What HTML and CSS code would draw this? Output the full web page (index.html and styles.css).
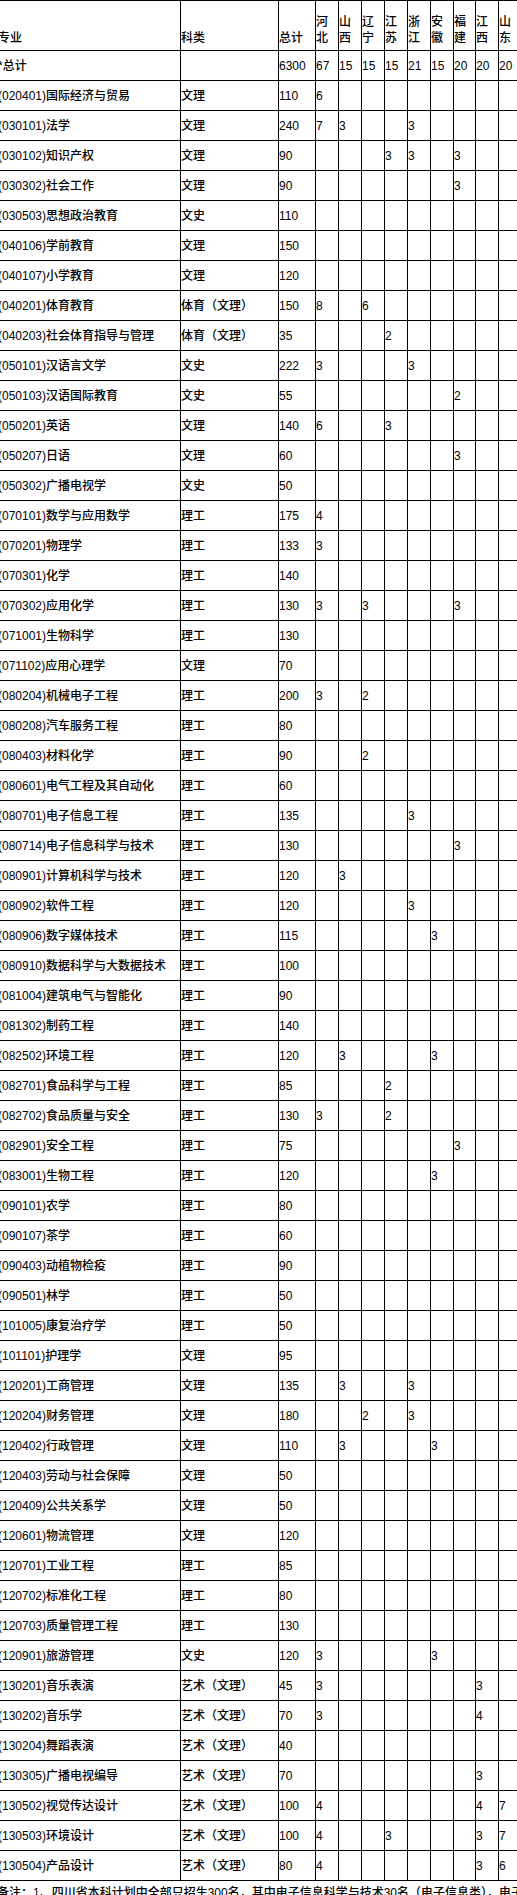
FILE: index.html
```html
<!DOCTYPE html>
<html lang="zh-CN">
<head>
<meta charset="utf-8">
<title>招生计划</title>
<link rel="stylesheet" href="styles.css">
</head>
<body>
<table class="sheet">
<thead>
<tr class="head">
<td class="c-major">专业</td><td class="c-type">科类</td><td class="c-total">总计</td>
<td class="c-p">河北</td><td class="c-p">山西</td><td class="c-p">辽宁</td><td class="c-p">江苏</td><td class="c-p">浙江</td><td class="c-p">安徽</td><td class="c-p c-narrow">福建</td><td class="c-p">江西</td><td class="c-p">山东</td>
</tr>
</thead>
<tbody>
<tr><td>*总计</td><td></td><td>6300</td><td>67</td><td>15</td><td>15</td><td>15</td><td>21</td><td>15</td><td>20</td><td>20</td><td>20</td></tr>
<tr><td>(020401)国际经济与贸易</td><td>文理</td><td>110</td><td>6</td><td></td><td></td><td></td><td></td><td></td><td></td><td></td><td></td></tr>
<tr><td>(030101)法学</td><td>文理</td><td>240</td><td>7</td><td>3</td><td></td><td></td><td>3</td><td></td><td></td><td></td><td></td></tr>
<tr><td>(030102)知识产权</td><td>文理</td><td>90</td><td></td><td></td><td></td><td>3</td><td>3</td><td></td><td>3</td><td></td><td></td></tr>
<tr><td>(030302)社会工作</td><td>文理</td><td>90</td><td></td><td></td><td></td><td></td><td></td><td></td><td>3</td><td></td><td></td></tr>
<tr><td>(030503)思想政治教育</td><td>文史</td><td>110</td><td></td><td></td><td></td><td></td><td></td><td></td><td></td><td></td><td></td></tr>
<tr><td>(040106)学前教育</td><td>文理</td><td>150</td><td></td><td></td><td></td><td></td><td></td><td></td><td></td><td></td><td></td></tr>
<tr><td>(040107)小学教育</td><td>文理</td><td>120</td><td></td><td></td><td></td><td></td><td></td><td></td><td></td><td></td><td></td></tr>
<tr><td>(040201)体育教育</td><td>体育（文理）</td><td>150</td><td>8</td><td></td><td>6</td><td></td><td></td><td></td><td></td><td></td><td></td></tr>
<tr><td>(040203)社会体育指导与管理</td><td>体育（文理）</td><td>35</td><td></td><td></td><td></td><td>2</td><td></td><td></td><td></td><td></td><td></td></tr>
<tr><td>(050101)汉语言文学</td><td>文史</td><td>222</td><td>3</td><td></td><td></td><td></td><td>3</td><td></td><td></td><td></td><td></td></tr>
<tr><td>(050103)汉语国际教育</td><td>文史</td><td>55</td><td></td><td></td><td></td><td></td><td></td><td></td><td>2</td><td></td><td></td></tr>
<tr><td>(050201)英语</td><td>文理</td><td>140</td><td>6</td><td></td><td></td><td>3</td><td></td><td></td><td></td><td></td><td></td></tr>
<tr><td>(050207)日语</td><td>文理</td><td>60</td><td></td><td></td><td></td><td></td><td></td><td></td><td>3</td><td></td><td></td></tr>
<tr><td>(050302)广播电视学</td><td>文史</td><td>50</td><td></td><td></td><td></td><td></td><td></td><td></td><td></td><td></td><td></td></tr>
<tr><td>(070101)数学与应用数学</td><td>理工</td><td>175</td><td>4</td><td></td><td></td><td></td><td></td><td></td><td></td><td></td><td></td></tr>
<tr><td>(070201)物理学</td><td>理工</td><td>133</td><td>3</td><td></td><td></td><td></td><td></td><td></td><td></td><td></td><td></td></tr>
<tr><td>(070301)化学</td><td>理工</td><td>140</td><td></td><td></td><td></td><td></td><td></td><td></td><td></td><td></td><td></td></tr>
<tr><td>(070302)应用化学</td><td>理工</td><td>130</td><td>3</td><td></td><td>3</td><td></td><td></td><td></td><td>3</td><td></td><td></td></tr>
<tr><td>(071001)生物科学</td><td>理工</td><td>130</td><td></td><td></td><td></td><td></td><td></td><td></td><td></td><td></td><td></td></tr>
<tr><td>(071102)应用心理学</td><td>文理</td><td>70</td><td></td><td></td><td></td><td></td><td></td><td></td><td></td><td></td><td></td></tr>
<tr><td>(080204)机械电子工程</td><td>理工</td><td>200</td><td>3</td><td></td><td>2</td><td></td><td></td><td></td><td></td><td></td><td></td></tr>
<tr><td>(080208)汽车服务工程</td><td>理工</td><td>80</td><td></td><td></td><td></td><td></td><td></td><td></td><td></td><td></td><td></td></tr>
<tr><td>(080403)材料化学</td><td>理工</td><td>90</td><td></td><td></td><td>2</td><td></td><td></td><td></td><td></td><td></td><td></td></tr>
<tr><td>(080601)电气工程及其自动化</td><td>理工</td><td>60</td><td></td><td></td><td></td><td></td><td></td><td></td><td></td><td></td><td></td></tr>
<tr><td>(080701)电子信息工程</td><td>理工</td><td>135</td><td></td><td></td><td></td><td></td><td>3</td><td></td><td></td><td></td><td></td></tr>
<tr><td>(080714)电子信息科学与技术</td><td>理工</td><td>130</td><td></td><td></td><td></td><td></td><td></td><td></td><td>3</td><td></td><td></td></tr>
<tr><td>(080901)计算机科学与技术</td><td>理工</td><td>120</td><td></td><td>3</td><td></td><td></td><td></td><td></td><td></td><td></td><td></td></tr>
<tr><td>(080902)软件工程</td><td>理工</td><td>120</td><td></td><td></td><td></td><td></td><td>3</td><td></td><td></td><td></td><td></td></tr>
<tr><td>(080906)数字媒体技术</td><td>理工</td><td>115</td><td></td><td></td><td></td><td></td><td></td><td>3</td><td></td><td></td><td></td></tr>
<tr><td>(080910)数据科学与大数据技术</td><td>理工</td><td>100</td><td></td><td></td><td></td><td></td><td></td><td></td><td></td><td></td><td></td></tr>
<tr><td>(081004)建筑电气与智能化</td><td>理工</td><td>90</td><td></td><td></td><td></td><td></td><td></td><td></td><td></td><td></td><td></td></tr>
<tr><td>(081302)制药工程</td><td>理工</td><td>140</td><td></td><td></td><td></td><td></td><td></td><td></td><td></td><td></td><td></td></tr>
<tr><td>(082502)环境工程</td><td>理工</td><td>120</td><td></td><td>3</td><td></td><td></td><td></td><td>3</td><td></td><td></td><td></td></tr>
<tr><td>(082701)食品科学与工程</td><td>理工</td><td>85</td><td></td><td></td><td></td><td>2</td><td></td><td></td><td></td><td></td><td></td></tr>
<tr><td>(082702)食品质量与安全</td><td>理工</td><td>130</td><td>3</td><td></td><td></td><td>2</td><td></td><td></td><td></td><td></td><td></td></tr>
<tr><td>(082901)安全工程</td><td>理工</td><td>75</td><td></td><td></td><td></td><td></td><td></td><td></td><td>3</td><td></td><td></td></tr>
<tr><td>(083001)生物工程</td><td>理工</td><td>120</td><td></td><td></td><td></td><td></td><td></td><td>3</td><td></td><td></td><td></td></tr>
<tr><td>(090101)农学</td><td>理工</td><td>80</td><td></td><td></td><td></td><td></td><td></td><td></td><td></td><td></td><td></td></tr>
<tr><td>(090107)茶学</td><td>理工</td><td>60</td><td></td><td></td><td></td><td></td><td></td><td></td><td></td><td></td><td></td></tr>
<tr><td>(090403)动植物检疫</td><td>理工</td><td>90</td><td></td><td></td><td></td><td></td><td></td><td></td><td></td><td></td><td></td></tr>
<tr><td>(090501)林学</td><td>理工</td><td>50</td><td></td><td></td><td></td><td></td><td></td><td></td><td></td><td></td><td></td></tr>
<tr><td>(101005)康复治疗学</td><td>理工</td><td>50</td><td></td><td></td><td></td><td></td><td></td><td></td><td></td><td></td><td></td></tr>
<tr><td>(101101)护理学</td><td>文理</td><td>95</td><td></td><td></td><td></td><td></td><td></td><td></td><td></td><td></td><td></td></tr>
<tr><td>(120201)工商管理</td><td>文理</td><td>135</td><td></td><td>3</td><td></td><td></td><td>3</td><td></td><td></td><td></td><td></td></tr>
<tr><td>(120204)财务管理</td><td>文理</td><td>180</td><td></td><td></td><td>2</td><td></td><td>3</td><td></td><td></td><td></td><td></td></tr>
<tr><td>(120402)行政管理</td><td>文理</td><td>110</td><td></td><td>3</td><td></td><td></td><td></td><td>3</td><td></td><td></td><td></td></tr>
<tr><td>(120403)劳动与社会保障</td><td>文理</td><td>50</td><td></td><td></td><td></td><td></td><td></td><td></td><td></td><td></td><td></td></tr>
<tr><td>(120409)公共关系学</td><td>文理</td><td>50</td><td></td><td></td><td></td><td></td><td></td><td></td><td></td><td></td><td></td></tr>
<tr><td>(120601)物流管理</td><td>文理</td><td>120</td><td></td><td></td><td></td><td></td><td></td><td></td><td></td><td></td><td></td></tr>
<tr><td>(120701)工业工程</td><td>理工</td><td>85</td><td></td><td></td><td></td><td></td><td></td><td></td><td></td><td></td><td></td></tr>
<tr><td>(120702)标准化工程</td><td>理工</td><td>80</td><td></td><td></td><td></td><td></td><td></td><td></td><td></td><td></td><td></td></tr>
<tr><td>(120703)质量管理工程</td><td>理工</td><td>130</td><td></td><td></td><td></td><td></td><td></td><td></td><td></td><td></td><td></td></tr>
<tr><td>(120901)旅游管理</td><td>文史</td><td>120</td><td>3</td><td></td><td></td><td></td><td></td><td>3</td><td></td><td></td><td></td></tr>
<tr><td>(130201)音乐表演</td><td>艺术（文理）</td><td>45</td><td>3</td><td></td><td></td><td></td><td></td><td></td><td></td><td>3</td><td></td></tr>
<tr><td>(130202)音乐学</td><td>艺术（文理）</td><td>70</td><td>3</td><td></td><td></td><td></td><td></td><td></td><td></td><td>4</td><td></td></tr>
<tr><td>(130204)舞蹈表演</td><td>艺术（文理）</td><td>40</td><td></td><td></td><td></td><td></td><td></td><td></td><td></td><td></td><td></td></tr>
<tr><td>(130305)广播电视编导</td><td>艺术（文理）</td><td>70</td><td></td><td></td><td></td><td></td><td></td><td></td><td></td><td>3</td><td></td></tr>
<tr><td>(130502)视觉传达设计</td><td>艺术（文理）</td><td>100</td><td>4</td><td></td><td></td><td></td><td></td><td></td><td></td><td>4</td><td>7</td></tr>
<tr><td>(130503)环境设计</td><td>艺术（文理）</td><td>100</td><td>4</td><td></td><td></td><td>3</td><td></td><td></td><td></td><td>3</td><td>7</td></tr>
<tr><td>(130504)产品设计</td><td>艺术（文理）</td><td>80</td><td>4</td><td></td><td></td><td></td><td></td><td></td><td></td><td>3</td><td>6</td></tr>
</tbody>
</table>
<p class="note">备注：1、四川省本科计划中全部只招生300名，其中电子信息科学与技术30名（电子信息类），电子信息工程30名。</p>
</body>
</html>
```
FILE: styles.css
```css
html {
  overflow: hidden;
  background: #fff;
}
body {
  margin: 0;
  color: #000;
  font-family: "Liberation Sans Narrow", "Liberation Sans", "Noto Sans CJK SC", sans-serif;
  font-size: 12px;
  font-weight: 500;
}
.sheet {
  margin-left: -3px;
  table-layout: fixed;
  width: 525px;
  border-collapse: separate;
  border-spacing: 0;
  border-top: 1px solid #000;
  border-left: 1px solid #000;
}
.sheet td {
  box-sizing: border-box;
  height: 30px;
  padding: 1px 0 0 0;
  border-right: 1px solid #000;
  border-bottom: 1px solid #000;
  line-height: 16px;
  vertical-align: middle;
  white-space: nowrap;
  overflow: hidden;
}
.sheet .head td {
  height: 50px;
  padding: 0 0 4px 0;
  vertical-align: bottom;
  white-space: normal;
}
.sheet .head .c-p {
  padding-right: 1px;
}
.c-major { width: 183px; }
.c-type { width: 98px; }
.c-total { width: 37px; }
.c-p { width: 23px; }
.c-narrow { width: 22px; }
.note {
  margin: 4px 0 0 -3px;
  font-size: 12px;
  line-height: 16px;
  white-space: nowrap;
}
```
